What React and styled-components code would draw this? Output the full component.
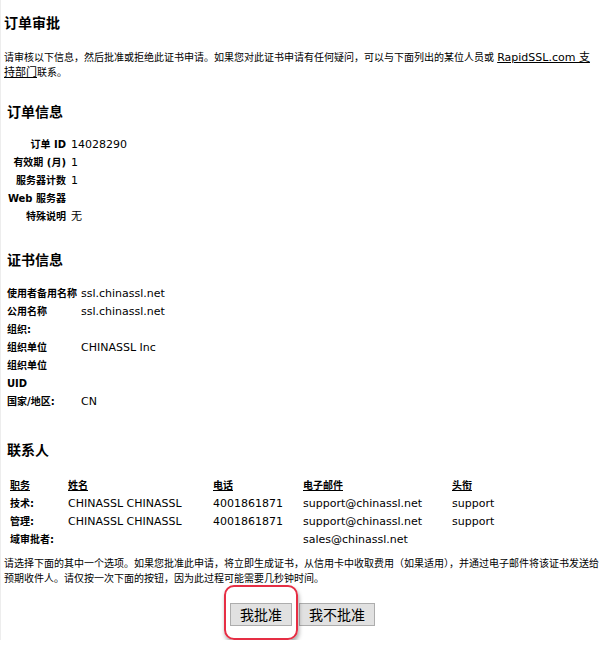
import styled, { createGlobalStyle } from "styled-components";

const GlobalStyle = createGlobalStyle`
  body {
    margin: 0;
    background: #fff;
    color: #000;
    font-family: "DejaVu Sans", "Noto Sans CJK SC", sans-serif;
  }
`;

const orderInfo = [
  ["订单 ID", "14028290"],
  ["有效期 (月)", "1"],
  ["服务器计数", "1"],
  ["Web 服务器", ""],
  ["特殊说明", "无"],
];

const certInfo = [
  ["使用者备用名称", "ssl.chinassl.net"],
  ["公用名称", "ssl.chinassl.net"],
  ["组织:", ""],
  ["组织单位", "CHINASSL Inc"],
  ["组织单位", ""],
  ["UID", ""],
  ["国家/地区:", "CN"],
];

const contactHead = ["职务", "姓名", "电话", "电子邮件", "头衔"];

const contacts = [
  ["技术:", "CHINASSL CHINASSL", "4001861871", "support@chinassl.net", "support"],
  ["管理:", "CHINASSL CHINASSL", "4001861871", "support@chinassl.net", "support"],
  ["域审批者:", "", "", "sales@chinassl.net", ""],
];

function App() {
  return (
    <>
      <GlobalStyle />
      <Page>
        <Title>订单审批</Title>
        <Note $wrap={592} $top={19}>
          请审核以下信息，然后批准或拒绝此证书申请。如果您对此证书申请有任何疑问，可以与下面列出的某位人员或{" "}
          <Link href="#">RapidSSL.com 支持部门</Link>联系。
        </Note>

        <SectionTitle $top={23}>订单信息</SectionTitle>
        <OrderGrid>
          {orderInfo.map(([label, value]) => (
            <Row key={label}>
              <OrderLabel>{label}</OrderLabel>
              <Value>{value}</Value>
            </Row>
          ))}
        </OrderGrid>

        <SectionTitle $top={25}>证书信息</SectionTitle>
        <CertGrid>
          {certInfo.map(([label, value], i) => (
            <Row key={i}>
              <Label>{label}</Label>
              <Value>{value}</Value>
            </Row>
          ))}
        </CertGrid>

        <SectionTitle $top={30}>联系人</SectionTitle>
        <ContactGrid>
          {contactHead.map((h) => (
            <HeadCell key={h}>{h}</HeadCell>
          ))}
          {contacts.map((row, r) =>
            row.map((cell, c) =>
              c === 0 ? (
                <Label key={r + "-" + c}>{cell}</Label>
              ) : (
                <Value key={r + "-" + c}>{cell}</Value>
              )
            )
          )}
        </ContactGrid>

        <Note $top={8}>
          请选择下面的其中一个选项。如果您批准此申请，将立即生成证书，从信用卡中收取费用（如果适用），并通过电子邮件将该证书发送给预期收件人。请仅按一次下面的按钮，因为此过程可能需要几秒钟时间。
        </Note>

        <ButtonRow>
          <Marked>
            <Button type="button">我批准</Button>
          </Marked>
          <Button type="button">我不批准</Button>
        </ButtonRow>
      </Page>
    </>
  );
}

const Page = styled.div`
  box-sizing: border-box;
  width: 609px;
  height: 640px;
  padding: 14px 4px 0 3px;
  border-left: 1px solid #ededed;
`;

const Title = styled.h1`
  margin: 0;
  font-size: 14px;
  line-height: 18px;
  font-weight: bold;
`;

const Note = styled.p`
  margin: ${(p) => p.$top}px 0 0;
  max-width: ${(p) => (p.$wrap ? p.$wrap + "px" : "none")};
  font-size: 10px;
  line-height: 14.5px;
`;

const Link = styled.a`
  color: #000;
  font-size: 11px;
  line-height: 14px;
  text-decoration: underline;
`;

const SectionTitle = styled.h2`
  margin: ${(p) => p.$top}px 0 0 3px;
  font-size: 14px;
  line-height: 18px;
  font-weight: bold;
`;

const Row = styled.div`
  display: contents;
`;

const Label = styled.div`
  font-size: 10px;
  font-weight: bold;
  line-height: 18px;
  height: 18px;
  white-space: nowrap;
`;

const OrderLabel = styled(Label)`
  text-align: right;
`;

const Value = styled.div`
  font-size: 11px;
  line-height: 18px;
  height: 18px;
  white-space: nowrap;
`;

const OrderGrid = styled.div`
  display: grid;
  grid-template-columns: 59px auto;
  column-gap: 5px;
  margin: 15px 0 0 3px;
`;

const CertGrid = styled.div`
  display: grid;
  grid-template-columns: 74px auto;
  margin: 16px 0 0 3px;
`;

const ContactGrid = styled.div`
  display: grid;
  grid-template-columns: 58px 145px 90px 149px auto;
  margin: 18px 0 0 6px;
`;

const HeadCell = styled(Label)`
  text-decoration: underline;
`;

const ButtonRow = styled.div`
  display: flex;
  justify-content: center;
  gap: 7px;
  margin-top: 17px;
  padding-right: 4px;
`;

const Marked = styled.span`
  position: relative;
  display: inline-flex;

  &::after {
    content: "";
    position: absolute;
    inset: -18px -6px -14px -6px;
    border: 2px solid #e62e44;
    border-radius: 10px;
    box-shadow: 1px 3px 4px rgba(0, 0, 0, 0.35);
    pointer-events: none;
  }
`;

const Button = styled.button`
  height: 23px;
  padding: 0 9px;
  border: 1px solid #adadad;
  border-radius: 0;
  background: #e1e1e1;
  color: #000;
  font-family: "Noto Sans CJK SC", sans-serif;
  font-size: 14px;
  line-height: 21px;
  cursor: pointer;
`;

export default App;
